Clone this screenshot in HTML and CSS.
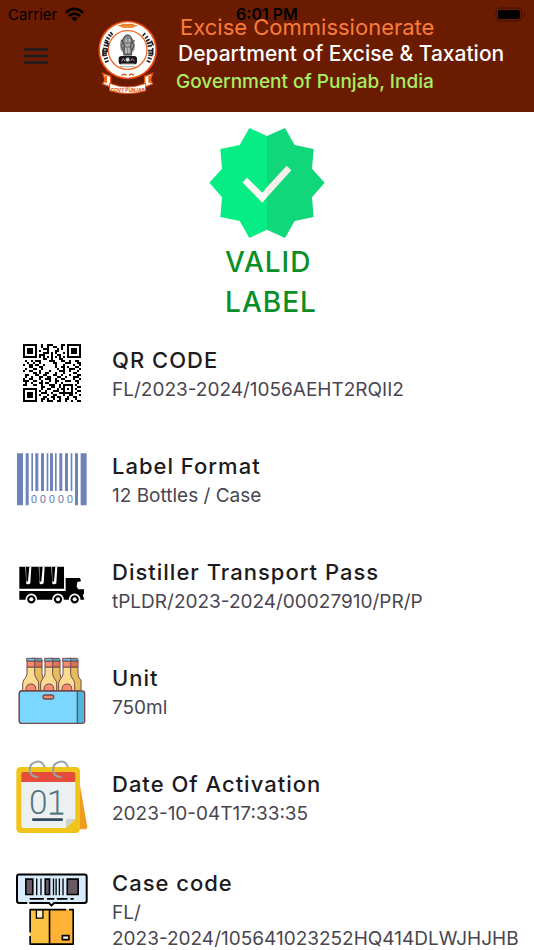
FILE: index.html
```html
<!DOCTYPE html>
<html lang="en">
<head>
    <meta charset="UTF-8">
    <meta name="viewport" content="width=device-width, initial-scale=1.0">
    <title>Valid Label</title>
    <link rel="stylesheet" href="styles.css">
</head>
<body>
    <div class="status-bar">
        <div class="carrier">
            <span>Carrier</span>
            <svg width="19" height="15" viewBox="194 16 58 45" aria-hidden="true">
                <path d="M197 33Q223 10 249 33M206 43Q223 28 240 43" fill="none" stroke="#000" stroke-width="8"/>
                <path d="M213 50Q223 42 233 50L223 60z"/>
            </svg>
        </div>
        <span class="time">6:01 PM</span>
        <svg class="battery" width="31" height="15" viewBox="0 0 31 15" aria-hidden="true">
            <rect x="1" y="1" width="26" height="13" rx="4" fill="none" stroke="#3c1208"/>
            <rect x="3" y="3" width="22" height="9" rx="2"/>
            <path d="M29 5q2 2 0 5z" fill="#3c1208"/>
        </svg>
    </div>

    <header class="header">
        <button class="menu-button" aria-label="Menu">
            <svg width="24" height="16" viewBox="0 0 24 16">
                <path d="M0 1.5h24M0 8h24M0 14.5h24" stroke="#1d1b20" stroke-width="2.4"/>
            </svg>
        </button>
        <svg class="emblem" width="60" height="74" viewBox="24 28 180 222" aria-hidden="true">
            <circle cx="113" cy="118" r="88" fill="#e8500e"/>
            <circle cx="113" cy="118" r="83" fill="#fff"/>
            <circle cx="113" cy="118" r="58" fill="#fff" stroke="#ef6a2c" stroke-width="4"/>
            <path d="M90 45l8-4h30l8 4-8 5H98zM84 45h58" fill="#f6a14f" stroke="#e8781e" stroke-width="3"/>
            <path d="M38 135l13-2M39 128l12-1M38 121l13 1v-7l-12-2M41 103l12 3 2-8-12-3M45 88l10 6M49 80l10 6M55 71l9 7M61 64l7 9M42 145l12-4M45 155l11-5M39 116v20" fill="none" stroke="#222" stroke-width="5"/>
            <path d="M188 135l-13-2M188 128l-13-1M188 119l-14 1M186 104l-13 3M183 95l-13 4M179 86l-11 6M174 76l-9 8M166 67l-8 9M185 145l-12-4M181 155l-11-5M188 112v20M184 90l6 14" fill="none" stroke="#222" stroke-width="5"/>
            <!-- lion capital -->
            <path d="M99 83q-12 9-8 24-2 12 8 18l2 12h24l2-12q10-7 7-19 2-15-8-23l-5-8q-8-6-17 0z" fill="#999"/>
            <path d="M103 78q10-11 20 0l4 13-5 12 3 28h-24l2-28-6-12zM92 88l8 8-6 8 6 15M134 88l-8 8 6 8-6 15" fill="#888" stroke="#444" stroke-width="3"/>
            <path d="M108 85v8M118 85v8M107 102q6 5 12 0M108 112v15M117 112v15" stroke="#ddd" stroke-width="3" fill="none"/>
            <rect x="86" y="136" width="55" height="25" rx="8" fill="#181818"/>
            <circle cx="113" cy="147" r="7" fill="#ddd" stroke="#181818" stroke-width="2"/>
            <path d="M95 152l5-8 5 8M122 151l5-7 6 7M93 160h41" stroke="#eee" stroke-width="2" fill="none"/>
            <path d="M91 168h44" stroke="#777" stroke-width="3" stroke-dasharray="4 2"/>
            <path d="M94 194l10-3 5 3M117 194l7-4 8 4" stroke="#e8500e" stroke-width="4" fill="none"/>
            <path d="M38 188l24 9v32l-24-9 7-12zM188 188l-24 9v32l24-9-7-12z" fill="#fff" stroke="#e8500e" stroke-width="4"/>
            <path d="M47 196v20M179 196v20" stroke="#f36617" stroke-width="8"/>
            <path d="M59 218q54 22 108 0v22q-54 17-108 0z" fill="#fff" stroke="#e8500e" stroke-width="3"/>
            <text class="emblem-text" x="113" y="243" text-anchor="middle">GOVT PUNJAB</text>
        </svg>
        <div class="banner">
            <p class="banner-office">Excise Commissionerate</p>
            <p class="banner-department">Department of Excise &amp; Taxation</p>
            <p class="banner-government">Government of Punjab, India</p>
        </div>
    </header>

    <main class="content">
        <section class="result">
            <svg width="116" height="110" viewBox="28 24 346 330" aria-hidden="true">
                <path fill="#05ed84" d="M148 24L201 48V329L148 354 119 303 61 291 66 232 28 188 66 146 61 87 119 75z"/>
                <path fill="#10d77a" d="M201 48L255 24 284 75 341 87 336 146 374 188 336 232 341 291 284 303 255 354 201 329z"/>
                <path fill="#fff9f5" d="M127 187l14-14 46 45 14-17v31l-14 16z"/>
                <path fill="#f5efe9" d="M201 201l59-64 14 14-73 81z"/>
            </svg>
            <h1 class="result-text">VALID LABEL</h1>
        </section>

        <ul class="details">
            <li class="detail">
                <div class="detail-icon">
                    <svg width="58" height="58" viewBox="0 0 29 29" shape-rendering="crispEdges" aria-hidden="true">
                        <g fill="none" stroke="#000">
                            <path d="M.5 .5h6v6h-6zM22.5 .5h6v6h-6zM.5 22.5h6v6h-6z"/>
                            <path d="M2 3.500h3M24 3.500h3M2 25.500h3M20.500 20.500h4v4h-4zM22 22.500h1" />
                            <path d="M2 2.500h3M2 4.500h3M24 2.500h3M24 4.500h3M2 24.500h3M2 26.500h3"/>
                            <path d="M9 .5h1M12 .5h3M19 .5h2M9 1.500h1M12 1.500h1M15 1.500h2M19 1.500h1M10 2.500h3M17 2.500h1M19 2.500h1M8 3.500h1M12 3.500h1M16 3.500h2M10 4.500h3M14 4.500h1M16 4.500h1M20 4.500h1M8 5.500h3M14 5.500h1M17 5.500h2M8 6.500h1M10 6.500h1M12 6.500h1M14 6.500h1M16 6.500h1M18 6.500h1M20 6.500h1M10 7.500h2M14 7.500h1M18 7.500h2"/>
                            <path d="M1 8.500h1M4 8.500h1M6 8.500h3M13 8.500h3M19 8.500h2M23 8.500h1M26 8.500h2M2 9.500h1M5 9.500h1M8 9.500h1M15 9.500h2M21 9.500h3M27 9.500h2M0 10.500h1M3 10.500h2M6 10.500h2M10 10.500h1M16 10.500h1M20 10.500h1M25 10.500h1M28 10.500h1M3 11.500h2M8 11.500h2M16 11.500h1M19 11.500h2M22 11.500h1M26 11.500h2M1 12.500h1M5 12.500h2M9 12.500h1M17 12.500h1M20 12.500h1M23 12.500h3M28 12.500h1"/>
                            <path d="M0 13.500h1M3 13.500h2M8 13.500h1M13 13.500h1M18 13.500h3M23 13.500h1M27 13.500h1M5 14.500h2M8 14.500h1M11 14.500h2M16 14.500h1M20 14.500h1M25 14.500h2M1 15.500h2M6 15.500h2M10 15.500h2M15 15.500h2M19 15.500h1M23 15.500h1M27 15.500h2M1 16.500h1M4 16.500h1M8 16.500h2M12 16.500h2M17 16.500h2M21 16.500h1M25 16.500h3M0 17.500h1M3 17.500h2M8 17.500h1M11 17.500h3M16 17.500h1M19 17.500h2M25 17.500h1M28 17.500h1"/>
                            <path d="M0 18.500h3M5 18.500h2M9 18.500h1M13 18.500h1M16 18.500h2M21 18.500h3M26 18.500h2M1 19.500h1M4 19.500h1M8 19.500h2M11 19.500h2M16 19.500h1M19 19.500h1M27 19.500h1M0 20.500h2M5 20.500h2M9 20.500h1M13 20.500h3M18 20.500h1M26 20.500h1M9 21.500h2M14 21.500h2M18 21.500h1M27 21.500h2M9 22.500h1M12 22.500h2M17 22.500h1M19 22.500h1M26 22.500h1"/>
                            <path d="M8 23.500h1M11 23.500h1M15 23.500h3M27 23.500h2M9 24.500h3M14 24.500h1M18 24.500h3M26 24.500h1M8 25.500h1M12 25.500h1M15 25.500h2M20 25.500h1M23 25.500h2M28 25.500h1M10 26.500h2M14 26.500h2M17 26.500h2M22 26.500h1M25 26.500h2M9 27.500h2M12 27.500h1M15 27.500h1M18 27.500h1M21 27.500h2M26 27.500h1M9 28.500h1M12 28.500h3M17 28.500h2M21 28.500h1M24 28.500h1M27 28.500h2"/>
                        </g>
                    </svg>
                </div>
                <div class="detail-text">
                    <h2>QR CODE</h2>
                    <p>FL/2023-2024/1056AEHT2RQII2</p>
                </div>
            </li>
            <li class="detail">
                <div class="detail-icon">
                    <svg width="70" height="53" viewBox="51 40 210 159" aria-hidden="true">
                        <g fill="#6d83b9">
                            <path d="M51 41h18v156H51zM77 41h9v156h-9zM225 41h9v156h-9zM242 41h18v156h-18z"/>
                            <path d="M94 41h5v113h-5zM106 41h9v113h-9zM123 41h9v113h-9zM140 41h5v113h-5zM150 41h9v113h-9zM165 41h5v113h-5zM178 41h9v113h-9zM195 41h9v113h-9zM212 41h5v113h-5z"/>
                            <text class="barcode-digits" x="92 119 146 173 200" y="189">00000</text>
                        </g>
                    </svg>
                </div>
                <div class="detail-text">
                    <h2>Label Format</h2>
                    <p>12 Bottles / Case</p>
                </div>
            </li>
            <li class="detail">
                <div class="detail-icon">
                    <svg width="66" height="38" viewBox="57 51 198 114" aria-hidden="true">
                        <path d="M58 53h134v66H58z"/>
                        <path d="M76 53l3 51q6 4 12-1l3-50h-6l-4 44q-4 4-5-3l-1-41zM116 53l3 51q6 4 12-1l3-50h-6l-4 44q-4 4-5-3l-1-41zM154 53l3 51q6 4 12-1l3-50h-6l-4 44q-4 4-5-3l-1-41z" fill="#fff"/>
                        <path d="M58 126h139V87h43l3 10-11 2-2 14 5 8h17v14l-4 2 5 15H58z"/>
                        <path d="M214 96h14v12l-6 6-8-8z"/>
                        <g stroke="#fff" stroke-width="5">
                            <circle cx="94" cy="151" r="15"/>
                            <circle cx="174" cy="151" r="15"/>
                            <circle cx="224" cy="151" r="15"/>
                        </g>
                        <g fill="#fff">
                            <path d="M70 154h8v12h-8zM110 154h47v12h-47zM190 154h18v12h-18z"/>
                            <circle cx="94" cy="151" r="6"/>
                            <circle cx="174" cy="151" r="6"/>
                            <circle cx="224" cy="151" r="6"/>
                        </g>
                    </svg>
                </div>
                <div class="detail-text">
                    <h2>Distiller Transport Pass</h2>
                    <p>tPLDR/2023-2024/00027910/PR/P</p>
                </div>
            </li>
            <li class="detail">
                <div class="detail-icon">
                    <svg width="68" height="68" viewBox="54 37 204 204" aria-hidden="true">
                        <defs>
                            <g id="bottle" stroke="#754a4b" stroke-width="3" stroke-linejoin="round">
                                <path d="M97 67h29v20q0 12 9 20v32h-38z" fill="#e5bd5c"/>
                                <path d="M97 49h29v18H97z" fill="#df7256"/>
                                <path d="M97 41h27l3 8H97z" fill="#4cafd0"/>
                                <path d="M81 67h23v20q0 9 7 17 5 5 5 13v22H68v-22q0-8 6-15 7-7 7-15z" fill="#f9dc91"/>
                                <path d="M81 49h23v18H81z" fill="#f58b70"/>
                                <path d="M80 41h25v8H80z" fill="#65c9ec"/>
                                <path d="M78 139v-7q1-14 15-14t14 14v7z" fill="#f58b70"/>
                            </g>
                        </defs>
                        <use href="#bottle"/>
                        <use href="#bottle" x="54"/>
                        <use href="#bottle" x="108"/>
                        <g stroke="#754a4b" stroke-width="4">
                            <rect x="58" y="139" width="196" height="97" rx="7" fill="#4cb7dd"/>
                            <path d="M65 139h167v97H65q-7 0-7-7v-83q0-7 7-7z" fill="#7bd7ff"/>
                            <rect x="129" y="151" width="32" height="12" rx="6" fill="#f58b70"/>
                        </g>
                    </svg>
                </div>
                <div class="detail-text">
                    <h2>Unit</h2>
                    <p>750ml</p>
                </div>
            </li>
            <li class="detail">
                <div class="detail-icon">
                    <svg width="72" height="74" viewBox="48 30 216 222" aria-hidden="true">
                        <path d="M230 50l32 181q0 6-6 7h-30z" fill="#f29c1f"/>
                        <rect x="49" y="51" width="191" height="198" rx="13" fill="#f0c419"/>
                        <path d="M64 96h162v111l-28 27H70q-6 0-6-6z" fill="#ecf0f1"/>
                        <path d="M64 96V72q0-6 6-6h150q6 0 6 6v24z" fill="#e64c3c"/>
                        <path d="M226 207l-28 27v-20q0-7 7-7z" fill="#d0d0cb"/>
                        <path d="M133 49q-7-16-23-14-20 3-21 24 2 22 23 22M203 49q-7-16-23-14-20 3-21 24 2 22 23 22" fill="none" stroke="#95a5a5" stroke-width="6" stroke-linecap="round"/>
                        <rect x="96" y="205" width="93" height="8" rx="4" fill="#324a5e"/>
                        <text class="calendar-day" x="87 141" y="193">01</text>
                        <path d="M153 191h34" stroke="#547580" stroke-width="7" stroke-linecap="round"/>
                    </svg>
                </div>
                <div class="detail-text">
                    <h2>Date Of Activation</h2>
                    <p>2023-10-04T17:33:35</p>
                </div>
            </li>
            <li class="detail">
                <div class="detail-icon">
                    <svg width="73" height="73" viewBox="47 38 219 219" aria-hidden="true">
                        <rect x="50" y="41" width="212" height="87" rx="7" fill="#d8ecfe"/>
                        <path d="M79 128H57q-7 0-7-7V48q0-7 7-7h198q7 0 7 7v73q0 7-7 7h-92l-8 7-8-7H90" fill="none" stroke="#000" stroke-width="6" stroke-linecap="round"/>
                        <g fill="#685b65" stroke="#000" stroke-width="5">
                            <path d="M77 55h21v47H77zM136 55h13v47h-13zM203 55h33v47h-33z"/>
                        </g>
                        <path d="M110 53v51M123 53v51M161 53v51M169 53v51M179 53v51M190 53v51" stroke="#000" stroke-width="4"/>
                        <path d="M90 115h40M143 115h19M173 115h29M214 115h7" stroke="#000" stroke-width="5" stroke-linecap="round"/>
                        <path d="M90 148h59v105H90z" fill="#ffc344"/>
                        <path d="M149 148h72v105h-72z" fill="#ffb236"/>
                        <path d="M109 148h20v26h-20z" fill="#fff0b4" stroke="#000" stroke-width="4"/>
                        <path d="M90 216v-68h108M210 148h11v105H90v-23M149 148v105" fill="none" stroke="#000" stroke-width="5" stroke-linecap="round" stroke-linejoin="round"/>
                        <path d="M188 227h20v12h-20z" fill="#fff" stroke="#000" stroke-width="5"/>
                    </svg>
                </div>
                <div class="detail-text">
                    <h2>Case code</h2>
                    <p>FL/<br>2023-2024/105641023252HQ414DLWJHJHB</p>
                </div>
            </li>
        </ul>
    </main>
</body>
</html>
```
FILE: styles.css
```css
* {
    box-sizing: border-box;
}

body {
    margin: 0;
    height: 100vh;
    display: flex;
    flex-direction: column;
    position: relative;
    background-color: #fff;
    color: #1d1b20;
    font-family: Inter, "Liberation Sans", sans-serif;
}

h1, h2, p, ul {
    margin: 0;
    padding: 0;
}

/* Status bar lies over the header */
.status-bar {
    position: absolute;
    top: 0;
    left: 0;
    right: 0;
    z-index: 1;
    display: grid;
    grid-template-columns: 1fr auto 1fr;
    align-items: center;
    height: 28px;
    padding: 0 8px;
    color: #000;
    font-size: 15px;
}

.carrier {
    display: flex;
    align-items: center;
    gap: 8px;
}

.time {
    font-size: 16px;
    font-weight: 600;
}

.battery {
    justify-self: end;
}

.header {
    display: flex;
    flex-shrink: 0;
    align-items: flex-start;
    padding: 16px 16px 16px 24px;
    background-color: #6a1b00;
}

.menu-button {
    display: flex;
    margin-top: 32px;
    padding: 0;
    border: none;
    background: none;
    cursor: pointer;
}

.emblem {
    flex-shrink: 0;
    margin: 4px 18px 0 50px;
}

.emblem-text {
    fill: #e8500e;
    font-size: 14px;
    font-weight: 700;
}

.banner {
    flex: 1;
    padding-bottom: 2px;
    white-space: nowrap;
}

.banner-office {
    padding-left: 4px;
    color: #f97c3c;
    font-size: 22px;
    line-height: 22px;
}

.banner-department {
    padding-left: 2px;
    color: #fff;
    font-size: 21px;
    font-weight: 500;
    line-height: 32px;
}

.banner-government {
    color: #a6f062;
    font-size: 19px;
    font-weight: 500;
    line-height: 24px;
}

.content {
    flex: 1;
    min-height: 0;
    overflow-y: auto;
    scrollbar-width: none;
}

.result {
    display: flex;
    flex-direction: column;
    align-items: center;
    padding-top: 16px;
}

.result-text {
    width: min-content;
    margin: 4px 0 -2px;
    padding-left: 8px;
    color: #0a8f28;
    font-size: 28px;
    font-weight: 500;
    line-height: 40px;
    letter-spacing: 1px;
}

.details {
    list-style: none;
}

.detail {
    display: flex;
    align-items: center;
    gap: 24px;
    min-height: 106px;
    padding: 16px 8px 16px 16px;
}

.detail-icon {
    display: flex;
    flex-shrink: 0;
    justify-content: center;
    width: 72px;
}

.detail-text h2 {
    font-size: 22px;
    font-weight: 500;
    line-height: 34px;
    letter-spacing: 1px;
}

.detail-text p {
    color: #49454f;
    font-size: 19px;
    line-height: 26px;
    white-space: nowrap;
}

.barcode-digits {
    font-size: 34px;
    font-family: Roboto, sans-serif;
}

.calendar-day {
    fill: #547580;
    font-size: 100px;
    font-weight: 300;
    font-family: Roboto, sans-serif;
}
```
